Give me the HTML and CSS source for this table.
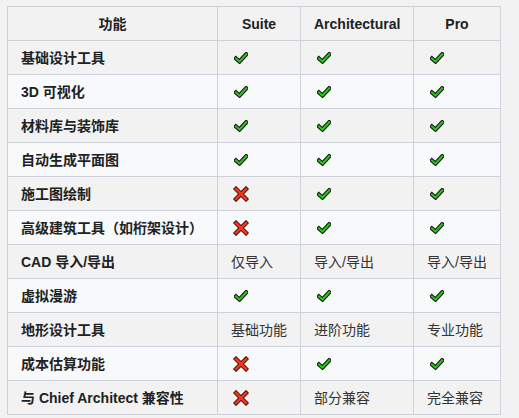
FILE: index.html
```html
<!DOCTYPE html>
<html lang="zh">
<head>
<meta charset="utf-8">
<title>功能对比</title>
<link rel="stylesheet" href="styles.css">
</head>
<body>
<svg width="0" height="0" class="defs" aria-hidden="true">
  <defs>
    <symbol id="yes" viewBox="0 0 14 12">
      <path d="M2 6.5 L5.5 9.5 L12.2 2.3" fill="none" stroke="#111" stroke-width="4.2" stroke-linecap="square" stroke-linejoin="miter"/>
      <path d="M2 6.5 L5.5 9.5 L12.2 2.3" fill="none" stroke="#2bc21b" stroke-width="2.2" stroke-linecap="square" stroke-linejoin="miter"/>
    </symbol>
    <symbol id="no" viewBox="0 0 16 16">
      <path d="M3 3 L13 13 M13 3 L3 13" fill="none" stroke="#3a0a05" stroke-width="4.4" stroke-linecap="square"/>
      <path d="M3 3 L13 13 M13 3 L3 13" fill="none" stroke="#f0361d" stroke-width="2.6" stroke-linecap="square"/>
    </symbol>
  </defs>
</svg>
<table class="cmp">
  <colgroup>
    <col class="c1"><col class="c2"><col class="c3"><col class="c4">
  </colgroup>
  <thead>
    <tr><th>功能</th><th>Suite</th><th>Architectural</th><th>Pro</th></tr>
  </thead>
  <tbody>
    <tr><td class="f">基础设计工具</td>
      <td><svg class="yes"><use href="#yes"/></svg></td>
      <td><svg class="yes"><use href="#yes"/></svg></td>
      <td><svg class="yes"><use href="#yes"/></svg></td></tr>
    <tr><td class="f">3D 可视化</td>
      <td><svg class="yes"><use href="#yes"/></svg></td>
      <td><svg class="yes"><use href="#yes"/></svg></td>
      <td><svg class="yes"><use href="#yes"/></svg></td></tr>
    <tr><td class="f">材料库与装饰库</td>
      <td><svg class="yes"><use href="#yes"/></svg></td>
      <td><svg class="yes"><use href="#yes"/></svg></td>
      <td><svg class="yes"><use href="#yes"/></svg></td></tr>
    <tr><td class="f">自动生成平面图</td>
      <td><svg class="yes"><use href="#yes"/></svg></td>
      <td><svg class="yes"><use href="#yes"/></svg></td>
      <td><svg class="yes"><use href="#yes"/></svg></td></tr>
    <tr><td class="f">施工图绘制</td>
      <td><svg class="no"><use href="#no"/></svg></td>
      <td><svg class="yes"><use href="#yes"/></svg></td>
      <td><svg class="yes"><use href="#yes"/></svg></td></tr>
    <tr><td class="f">高级建筑工具（如桁架设计）</td>
      <td><svg class="no"><use href="#no"/></svg></td>
      <td><svg class="yes"><use href="#yes"/></svg></td>
      <td><svg class="yes"><use href="#yes"/></svg></td></tr>
    <tr><td class="f">CAD 导入/导出</td>
      <td>仅导入</td>
      <td>导入/导出</td>
      <td>导入/导出</td></tr>
    <tr><td class="f">虚拟漫游</td>
      <td><svg class="yes"><use href="#yes"/></svg></td>
      <td><svg class="yes"><use href="#yes"/></svg></td>
      <td><svg class="yes"><use href="#yes"/></svg></td></tr>
    <tr><td class="f">地形设计工具</td>
      <td>基础功能</td>
      <td>进阶功能</td>
      <td>专业功能</td></tr>
    <tr><td class="f">成本估算功能</td>
      <td><svg class="no"><use href="#no"/></svg></td>
      <td><svg class="yes"><use href="#yes"/></svg></td>
      <td><svg class="yes"><use href="#yes"/></svg></td></tr>
    <tr><td class="f">与 Chief Architect 兼容性</td>
      <td><svg class="no"><use href="#no"/></svg></td>
      <td>部分兼容</td>
      <td>完全兼容</td></tr>
  </tbody>
</table>
</body>
</html>
```
FILE: styles.css
```css
html, body {
  margin: 0;
  padding: 0;
  background: #f2f2f2;
}
body {
  padding: 6px 0 0 7px;
  font-family: "Liberation Sans", Arial, "Noto Sans CJK SC", sans-serif;
  font-size: 14px;
  color: #333;
}
.defs {
  position: absolute;
  width: 0;
  height: 0;
  overflow: hidden;
}
.cmp {
  border-collapse: collapse;
  table-layout: fixed;
  width: 493px;
}
.c1 { width: 210px; }
.c2 { width: 83px; }
.c3 { width: 113px; }
.c4 { width: 87px; }
.cmp th,
.cmp td {
  border: 1px solid #cdd2da;
  height: 34px;
  padding: 0 13px;
  line-height: 18px;
  vertical-align: middle;
  box-sizing: border-box;
  white-space: nowrap;
}
.cmp th {
  font-weight: bold;
  text-align: center;
  color: #202122;
  background: #f2f2f2;
}
.cmp td {
  text-align: left;
}
.cmp td.f {
  font-weight: bold;
  color: #202122;
}
.cmp tbody tr:nth-child(odd) td { background: #f2f2f2; }
.cmp tbody tr:nth-child(even) td { background: #f8f9fa; }
.yes {
  display: block;
  width: 14px;
  height: 12px;
  margin-left: 3px;
}
.no {
  display: block;
  width: 16px;
  height: 16px;
  margin-left: 2px;
}
```
